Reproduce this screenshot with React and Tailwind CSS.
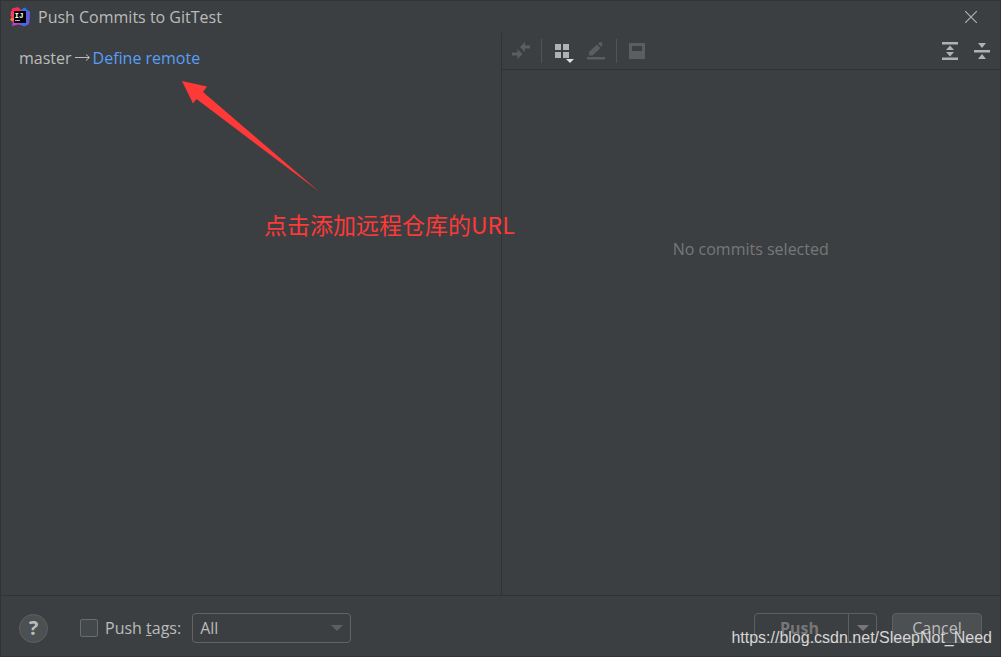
import React, { useState } from 'react';

const Logo = () => (
  <svg width="20" height="20" viewBox="0 0 20 20" aria-hidden="true">
    <path d="M0 13 2 9.500 6 11v4L2.500 14.500z" fill="#f6821f" />
    <path d="M2 1.500 8 0l4 4v8L1 11z" fill="#fe2857" />
    <path d="M1 4 6 6v6L.500 9z" fill="#f8405c" />
    <path d="M11 3 14.500.500 20 5l-1 12-5 2.500L9 17z" fill="#3b6cf0" />
    <path d="M17.500 3.500 20 5l-1 12-3 1z" fill="#6b57d8" />
    <path d="M3 13.500h4l5 4.500-4-.5L2 19z" fill="#c33ad0" />
    <rect x="4" y="4" width="12" height="12" fill="#000" />
    <rect x="5" y="13" width="5" height="1" fill="#b8b8b8" />
    <text x="4.500" y="10.500" fontSize="7.500" fontWeight="bold" fontFamily="Liberation Mono, monospace" fill="#fff">IJ</text>
  </svg>
);

const CloseIcon = () => (
  <svg width="12" height="12" viewBox="0 0 12 12" fill="none" stroke="#afb1b3" strokeWidth="1.2">
    <path d="M0 0 12 12M12 0 0 12" />
  </svg>
);

const CompareIcon = () => (
  <svg width="20" height="20" viewBox="0 0 20 20" fill="#5b5d5e">
    <path d="M9 6 14 1v3.500h5v3h-5V11z" />
    <path d="M11.500 13 6.500 8v3.500H1v3h5.500V18z" />
  </svg>
);

const GroupIcon = () => (
  <svg className="overflow-visible" width="20" height="20" viewBox="0 0 20 20" fill="#afb1b3">
    <path d="M1 3h6v6H1zM9 3h6v6H9zM1 11h6v6H1zM9 11h6v6H9z" />
    <path d="M12 18h8l-4 4z" fill="#e0e0e0" />
  </svg>
);

const EditIcon = () => (
  <svg width="20" height="20" viewBox="0 0 20 20" fill="#5b5d5e">
    <path d="M3 14.500v-3.500L11 3.500l3.500 3.500L6.500 14.500z" />
    <path d="M12 2.500 13.500 1.200q1.200-.6 2.200.4l.6.700q.7 1-.2 2L15.500 6z" />
    <path d="M1 16h18v2.500H1z" />
  </svg>
);

const PreviewIcon = () => (
  <svg width="16" height="16" viewBox="0 0 16 16">
    <path fillRule="evenodd" d="M0 0h16v16H0zM3 3v5h10V3z" fill="#5b5d5e" />
  </svg>
);

const ExpandIcon = () => (
  <svg width="16" height="18" viewBox="0 0 16 18" fill="#afb1b3">
    <path d="M0 0h16v2.500H0zM0 15.500h16V18H0zM8 3.500 12 8H4zM8 14.500 4 10h8z" />
  </svg>
);

const CollapseIcon = () => (
  <svg width="16" height="18" viewBox="0 0 16 18" fill="#afb1b3">
    <path d="M0 8h16v2.500H0zM4 1h8L8 6zM4 17h8L8 12z" />
  </svg>
);

const Caret = ({ className }) => (
  <svg className={className} width="12" height="6" viewBox="0 0 12 6" fill="currentColor" aria-hidden="true">
    <path d="M0 0h12L6 6z" />
  </svg>
);

const Separator = () => <span className="h-6 w-px bg-[#515456]" />;

const App = () => {
  const [pushTags, setPushTags] = useState(false);

  return (
    <div className="relative flex min-h-screen flex-col border border-[#313335] bg-[#3c3f41] font-['Open_Sans','Noto_Sans_CJK_SC',sans-serif] text-base text-[#bbbbbb]">
      <header className="flex h-8 items-center gap-2 pr-[23px] pl-[9px]">
        <Logo />
        <h1 className="flex-1">Push Commits to GitTest</h1>
        <button aria-label="Close"><CloseIcon /></button>
      </header>

      <main className="grid flex-1 grid-cols-2">
        <section className="relative px-[18px] pt-[13px]">
          <p className="flex items-center gap-[3px]">
            <span>master</span>
            <svg width="15" height="8" viewBox="0 0 15 8" fill="none" stroke="#bbbbbb" role="img" aria-label="to">
              <path d="M0 3.500h14M11 .5l3.500 3-3.500 3" />
            </svg>
            <a href="#remote" className="text-[#589df6]">Define remote</a>
          </p>
          {/* annotation */}
          <div className="absolute top-12 left-[181px] text-[#ff3838]">
            <svg width="137" height="111" viewBox="0 0 137 111" fill="currentColor" aria-hidden="true">
              <path d="M0 0 25 5.500 21 11 137 110.500 14.500 18 11 22.500z" />
            </svg>
          </div>
          <p className="absolute top-[175px] left-[263px] z-10 font-['Noto_Sans_CJK_SC',sans-serif] text-[23px] leading-8 whitespace-nowrap text-[#ff3838]">
            点击添加远程仓库的URL
          </p>
        </section>

        <section className="flex flex-col border-l border-[#323232]">
          <div className="flex h-[37px] items-center border-b border-[#323232] pr-[10px] pl-[9px]">
            <button aria-label="Compare" className="mr-[10px]" disabled><CompareIcon /></button>
            <Separator />
            <button aria-label="Group by" className="mr-3 ml-3"><GroupIcon /></button>
            <button aria-label="Edit" className="mr-[10px]" disabled><EditIcon /></button>
            <Separator />
            <button aria-label="Preview" className="ml-3" disabled><PreviewIcon /></button>
            <span className="flex-1" />
            <button aria-label="Expand all" className="mr-4"><ExpandIcon /></button>
            <button aria-label="Collapse all"><CollapseIcon /></button>
          </div>
          <p className="pt-[167px] text-center text-[#777777]">No commits selected</p>
        </section>
      </main>

      <footer className="flex h-[61px] items-center border-t border-[#323232] px-[18px] pt-1">
        <button aria-label="Help" className="mr-8 size-[29px] rounded-full border border-[#5e6060] bg-[#4c5052] font-['Noto_Sans',sans-serif] text-xl leading-6 font-bold">?</button>
        <input
          id="tags"
          type="checkbox"
          checked={pushTags}
          onChange={(e) => setPushTags(e.target.checked)}
          className="mr-[7px] size-[18px] appearance-none rounded-xs border border-[#6b6b6b] bg-[#43494a] checked:bg-[#589df6]"
        />
        <label htmlFor="tags" className="mr-[11px]">Push <span className="underline">t</span>ags:</label>
        <div className="relative">
          <select aria-label="Tags to push" className="h-[30px] w-[159px] appearance-none rounded-sm border border-[#646464] px-[7px]">
            <option>All</option>
            <option>Current Branch</option>
          </select>
          <Caret className="pointer-events-none absolute top-3 right-2 text-[#5e6060]" />
        </div>
        <span className="flex-1" />
        <div className="mr-[15px] flex h-[30px] rounded-sm border border-[#5e6060] text-[#777777]">
          <button className="w-[94px] border-r border-[#5e6060] pr-1 font-bold" disabled>Push</button>
          <button aria-label="Push options" className="flex w-[27px] items-center justify-center" disabled><Caret /></button>
        </div>
        <button className="h-[30px] w-[90px] rounded-sm border border-[#5e6060] bg-[#4c5052]">Cancel</button>
      </footer>

      <p className="pointer-events-none absolute right-2 bottom-2 font-['Liberation_Sans',sans-serif] text-base leading-5 text-[#d6d6d6]">
        https://blog.csdn.net/SleepNot_Need
      </p>
    </div>
  );
};

export default App;
